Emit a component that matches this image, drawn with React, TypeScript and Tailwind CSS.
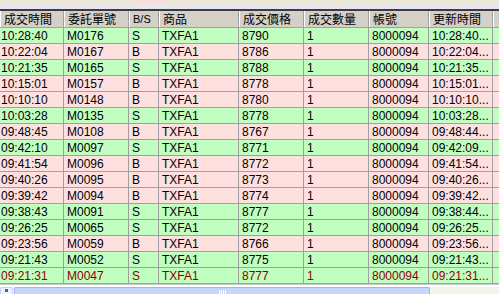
import React from 'react';

type Fill = {
    time: string;
    order: string;
    side: 'B' | 'S';
    price: string;
    updated: string;
    latest?: boolean;
};

const fills: Fill[] = [
    { time: '10:28:40', order: 'M0176', side: 'S', price: '8790', updated: '10:28:40...' },
    { time: '10:22:04', order: 'M0167', side: 'B', price: '8786', updated: '10:22:04...' },
    { time: '10:21:35', order: 'M0165', side: 'S', price: '8788', updated: '10:21:35...' },
    { time: '10:15:01', order: 'M0157', side: 'B', price: '8778', updated: '10:15:01...' },
    { time: '10:10:10', order: 'M0148', side: 'B', price: '8780', updated: '10:10:10...' },
    { time: '10:03:28', order: 'M0135', side: 'S', price: '8778', updated: '10:03:28...' },
    { time: '09:48:45', order: 'M0108', side: 'B', price: '8767', updated: '09:48:44...' },
    { time: '09:42:10', order: 'M0097', side: 'S', price: '8771', updated: '09:42:09...' },
    { time: '09:41:54', order: 'M0096', side: 'B', price: '8772', updated: '09:41:54...' },
    { time: '09:40:26', order: 'M0095', side: 'B', price: '8773', updated: '09:40:26...' },
    { time: '09:39:42', order: 'M0094', side: 'B', price: '8774', updated: '09:39:42...' },
    { time: '09:38:43', order: 'M0091', side: 'S', price: '8777', updated: '09:38:44...' },
    { time: '09:26:25', order: 'M0065', side: 'S', price: '8772', updated: '09:26:25...' },
    { time: '09:23:56', order: 'M0059', side: 'B', price: '8766', updated: '09:23:56...' },
    { time: '09:21:43', order: 'M0052', side: 'S', price: '8775', updated: '09:21:43...' },
    { time: '09:21:31', order: 'M0047', side: 'S', price: '8777', updated: '09:21:31...', latest: true },
];

const cell = 'h-full flex items-center border-r border-[#a0a0a0] whitespace-nowrap overflow-hidden';
const head = 'h-full flex items-center border-r border-[#a0a0a0] shadow-[inset_1px_0_0_#ffffff] whitespace-nowrap overflow-hidden pl-[4px]';

const App: React.FC = () => {
    return (
        <div className="w-[499px] h-[294px] overflow-hidden bg-[#ece9d8] text-[12px] leading-none text-black font-['Liberation_Sans',Arial,sans-serif]">
            {/* window chrome strip */}
            <div className="h-[6px] flex">
                <div className="w-[133px]" />
                <div className="w-[35px] h-[3px] bg-[#f8dede]" />
            </div>
            <div className="h-[3px] bg-[#e6e6f4]" />
            <div className="h-[2px] bg-[#3c3c3c]" />

            {/* header */}
            <div className="h-[17px] flex bg-[#d4d0c8] border-b border-[#a0a0a0] font-['Noto_Sans_CJK_TC','Liberation_Sans',sans-serif]">
                <div className={`${head} w-[64px] pl-[3px]`}>成交時間</div>
                <div className={`${head} w-[65px]`}>委託單號</div>
                <div className={`${head} w-[30px] text-[11px] font-['Liberation_Sans',sans-serif]`}>B/S</div>
                <div className={`${head} w-[80px]`}>商品</div>
                <div className={`${head} w-[65px]`}>成交價格</div>
                <div className={`${head} w-[65px]`}>成交數量</div>
                <div className={`${head} w-[60px]`}>帳號</div>
                <div className={`${head} w-[64px]`}>更新時間</div>
                <div className="flex-1 shadow-[inset_1px_0_0_#ffffff]" />
            </div>

            {/* rows */}
            {fills.map((f) => (
                <div
                    key={f.order}
                    className={`h-[16px] flex border-b border-[#a0a0a0] ${f.side === 'S' ? 'bg-[#c0ffc0]' : 'bg-[#ffe0e0]'} ${f.latest ? 'text-[#8b0000]' : 'text-black'}`}
                >
                    <div className={`${cell} w-[64px] pl-[1px]`}>{f.time}</div>
                    <div className={`${cell} w-[65px] pl-[3px]`}>{f.order}</div>
                    <div className={`${cell} w-[30px] pl-[3px]`}>{f.side}</div>
                    <div className={`${cell} w-[80px] pl-[3px]`}>TXFA1</div>
                    <div className={`${cell} w-[65px] pl-[3px]`}>{f.price}</div>
                    <div className={`${cell} w-[65px] pl-[3px]`}>1</div>
                    <div className={`${cell} w-[60px] pl-[3px]`}>8000094</div>
                    <div className={`${cell} w-[64px] pl-[3px]`}>{f.updated}</div>
                    <div className="flex-1" />
                </div>
            ))}

            {/* horizontal scrollbar */}
            <div className="h-[3px] bg-white border-t border-[#c8c8c8]" />
            <div className="h-[8px] flex bg-[#f4f3ee]">
                <div className="w-[13px] h-full bg-[#eef2fc] border border-[#c3d3fd] rounded-t-[2px] flex justify-center pt-[1px]">
                    <div className="w-[3px] h-[3px] bg-[#4d6185]" />
                </div>
                <div className="w-[1px]" />
                <div className="w-[416px] h-full bg-[#c6d7fb] border border-b-0 border-[#9eb6ee] rounded-t-[2px] flex justify-center pt-[2px] gap-[1px]">
                    <div className="w-[1px] h-[5px] bg-white" />
                    <div className="w-[1px] h-[5px] bg-white" />
                    <div className="w-[1px] h-[5px] bg-white" />
                    <div className="w-[1px] h-[5px] bg-white" />
                </div>
            </div>
        </div>
    );
};

export default App;
